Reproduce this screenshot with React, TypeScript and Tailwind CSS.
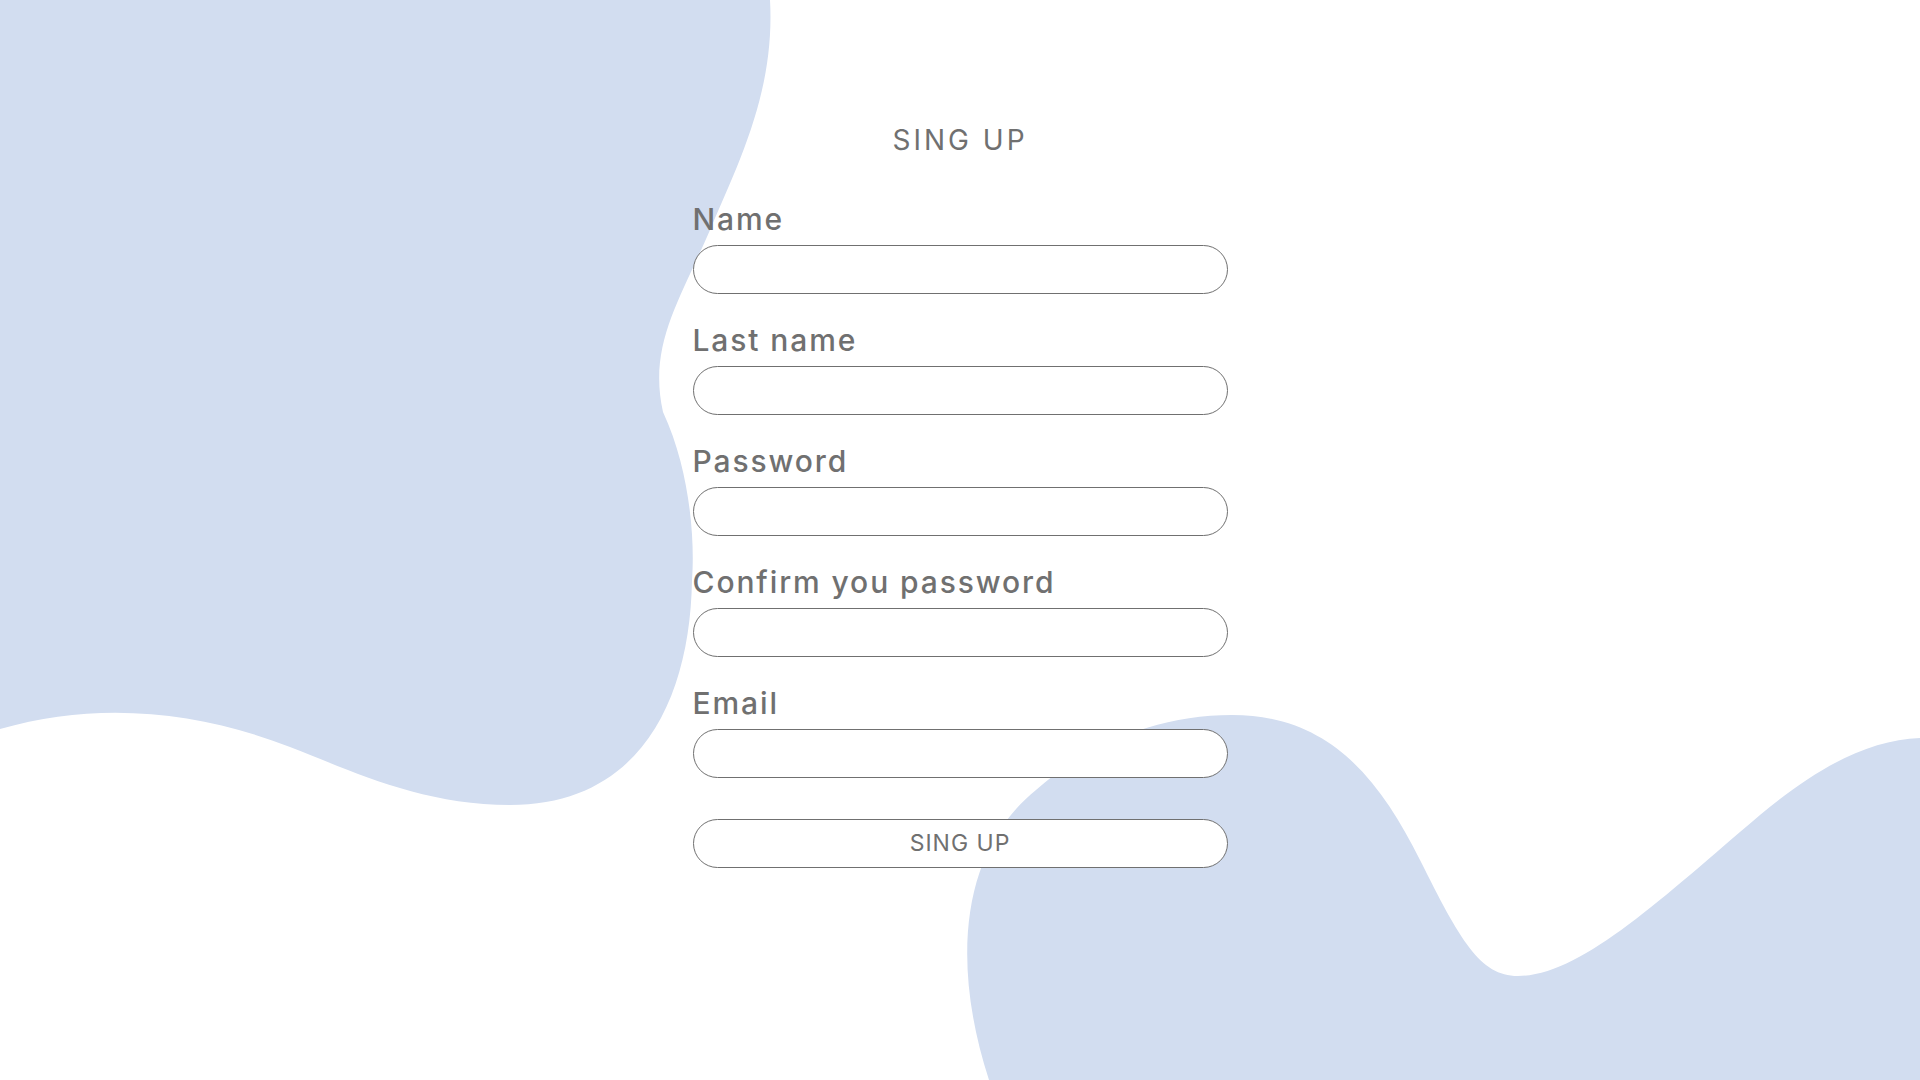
import * as React from 'react';

const fields = ['Name', 'Last name', 'Password', 'Confirm you password', 'Email'];

const Blobs = () => (
  <svg className="absolute inset-0 h-full w-full" viewBox="0 0 1920 1080" preserveAspectRatio="none" xmlns="http://www.w3.org/2000/svg">
    <path
      d="M0 0 H770 C775 90 740 160 710 230 C680 300 648 345 663 412 C690 470 695 540 692 580 C690 700 640 805 510 805 C420 805 350 770 290 747 C200 712 100 700 0 729 Z"
      fill="#d2ddf0"
    />
    <path
      d="M989 1080 C950 960 962 850 1036 790 C1090 742 1160 715 1232 715 C1330 715 1380 780 1420 860 C1460 940 1480 976 1518 976 C1580 976 1660 900 1760 815 C1820 765 1870 740 1920 738 L1920 1080 Z"
      fill="#d2ddf0"
    />
  </svg>
);

const SignUp = () => {
  return (
    <div className="relative h-[1080px] w-full overflow-hidden bg-white font-['Inter',sans-serif] text-[#707070]">
      <Blobs />
      <div className="relative flex flex-col items-center pt-[123px]">
        <h1 className="text-[28px] leading-[34px] font-normal tracking-[3px]">SING UP</h1>
        <form className="mt-[45px] flex w-[535px] flex-col" onSubmit={(e) => e.preventDefault()}>
          {fields.map((label) => (
            <label key={label} className="mb-[29px] flex flex-col">
              <span className="text-[30px] leading-[34px] font-medium tracking-[1.9px]">{label}</span>
              <input
                type={label.toLowerCase().includes('password') ? 'password' : 'text'}
                className="mt-[9px] h-[49px] w-full rounded-full border border-[#707070] bg-white px-6 text-lg outline-none"
              />
            </label>
          ))}
          <button
            type="submit"
            className="mt-[12px] flex h-[49px] w-full items-center justify-center rounded-full border border-[#707070] bg-white text-[23px] tracking-[1px]"
          >
            SING UP
          </button>
        </form>
      </div>
    </div>
  );
};

export default function App() {
  return <SignUp />;
}
